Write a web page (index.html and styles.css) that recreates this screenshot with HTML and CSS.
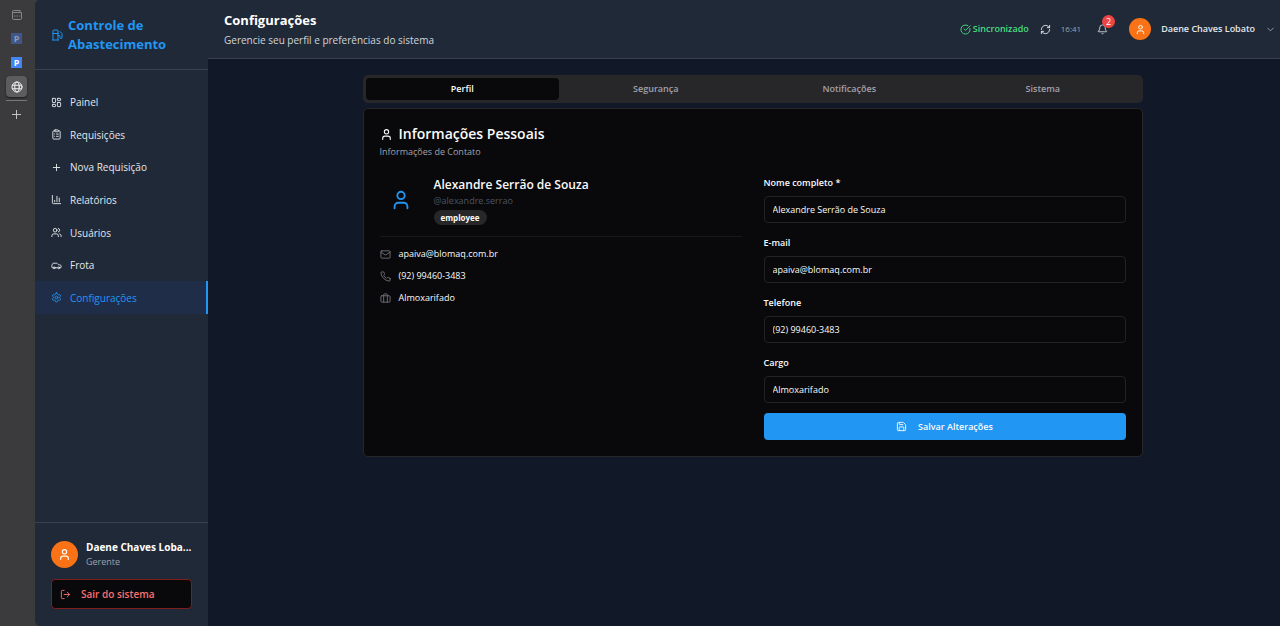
FILE: index.html
```html
<!DOCTYPE html>
<html lang="pt-BR">
<head>
<meta charset="utf-8">
<meta name="viewport" content="width=device-width, initial-scale=1">
<title>Controle de Abastecimento</title>
<link rel="stylesheet" href="styles.css">
</head>
<body>
<svg class="sprite" aria-hidden="true">
  <symbol id="user" viewBox="0 0 24 24"><path d="M19 21v-2a4 4 0 0 0-4-4H9a4 4 0 0 0-4 4v2"/><circle cx="12" cy="7" r="4"/></symbol>
</svg>
<div class="shell">
  <nav class="rail" aria-label="Abas">
    <button class="rail-btn dim" aria-label="Ações de abas"><svg class="icon s12" viewBox="0 0 24 24"><path d="M3 5a2 2 0 0 1 2-2h13v4h3v12a2 2 0 0 1-2 2H5a2 2 0 0 1-2-2zM3 7h15M7 14h1M12 14h1M17 14h.01"/></svg></button>
    <button class="rail-btn"><span class="tile faded">P</span></button>
    <button class="rail-btn"><span class="tile">P</span></button>
    <button class="rail-btn current" aria-label="Controle de Abastecimento"><svg class="icon s12" viewBox="0 0 24 24"><circle cx="12" cy="12" r="10"/><ellipse cx="12" cy="12" rx="4.500" ry="10"/><path d="M3 8.500h18M3 15.500h18"/></svg></button>
    <button class="rail-btn add" aria-label="Nova aba"><svg class="icon s11" viewBox="0 0 24 24"><path d="M3 12h18M12 3v18"/></svg></button>
  </nav>

  <aside class="sidebar">
    <div class="brand">
      <svg class="icon s12" viewBox="0 0 24 24"><path d="M3 22h12M4 9h10M14 22V4a2 2 0 0 0-2-2H6a2 2 0 0 0-2 2v18M14 13h2a2 2 0 0 1 2 2v2a2 2 0 0 0 4 0V9.830a2 2 0 0 0-.590-1.420L18 5"/></svg>
      <span>Controle de Abastecimento</span>
    </div>
    <ul class="menu">
      <li><a href="#painel"><svg class="icon s11" viewBox="0 0 24 24"><rect x="3" y="3" width="7" height="9" rx="1"/><rect x="14" y="3" width="7" height="5" rx="1"/><rect x="14" y="12" width="7" height="9" rx="1"/><rect x="3" y="16" width="7" height="5" rx="1"/></svg>Painel</a></li>
      <li><a href="#requisicoes"><svg class="icon s11" viewBox="0 0 24 24"><rect x="8" y="2" width="8" height="4" rx="1"/><path d="M16 4h2a2 2 0 0 1 2 2v14a2 2 0 0 1-2 2H6a2 2 0 0 1-2-2V6a2 2 0 0 1 2-2h2M12 11h4M12 16h4M8 11h.01M8 16h.01"/></svg>Requisições</a></li>
      <li><a href="#nova"><svg class="icon s11" viewBox="0 0 24 24"><path d="M5 12h14M12 5v14"/></svg>Nova Requisição</a></li>
      <li><a href="#relatorios"><svg class="icon s11" viewBox="0 0 24 24"><path d="M3 3v16a2 2 0 0 0 2 2h16M18 17V9M13 17V5M8 17v-3"/></svg>Relatórios</a></li>
      <li><a href="#usuarios"><svg class="icon s11" viewBox="0 0 24 24"><path d="M16 21v-2a4 4 0 0 0-4-4H6a4 4 0 0 0-4 4v2M22 21v-2a4 4 0 0 0-3-3.870M16 3.130a4 4 0 0 1 0 7.750"/><circle cx="9" cy="7" r="4"/></svg>Usuários</a></li>
      <li><a href="#frota"><svg class="icon s11" viewBox="0 0 24 24"><path d="M19 17h2c.6 0 1-.4 1-1v-3c0-.9-.7-1.700-1.500-1.900C18.700 10.600 16 10 16 10s-1.300-1.400-2.200-2.300c-.5-.4-1.100-.7-1.800-.7H5c-.6 0-1.100.4-1.400.9l-1.400 2.900A3.700 3.700 0 0 0 2 12v4c0 .6.4 1 1 1h2M9 17h6"/><circle cx="7" cy="17" r="2"/><circle cx="17" cy="17" r="2"/></svg>Frota</a></li>
      <li><a href="#configuracoes" class="active" aria-current="page"><svg class="icon s11" viewBox="0 0 24 24"><path d="M12.220 2h-.44a2 2 0 0 0-2 2v.18a2 2 0 0 1-1 1.730l-.43.25a2 2 0 0 1-2 0l-.15-.08a2 2 0 0 0-2.730.73l-.22.38a2 2 0 0 0 .73 2.730l.15.1a2 2 0 0 1 1 1.720v.51a2 2 0 0 1-1 1.740l-.15.09a2 2 0 0 0-.73 2.730l.22.38a2 2 0 0 0 2.730.73l.15-.08a2 2 0 0 1 2 0l.43.25a2 2 0 0 1 1 1.730V20a2 2 0 0 0 2 2h.44a2 2 0 0 0 2-2v-.18a2 2 0 0 1 1-1.730l.43-.25a2 2 0 0 1 2 0l.15.08a2 2 0 0 0 2.730-.73l.22-.39a2 2 0 0 0-.73-2.730l-.15-.08a2 2 0 0 1-1-1.740v-.5a2 2 0 0 1 1-1.740l.15-.09a2 2 0 0 0 .73-2.730l-.22-.38a2 2 0 0 0-2.730-.73l-.15.08a2 2 0 0 1-2 0l-.43-.25a2 2 0 0 1-1-1.730V4a2 2 0 0 0-2-2z"/><circle cx="12" cy="12" r="3"/></svg>Configurações</a></li>
    </ul>
    <div class="account">
      <div class="account-row">
        <span class="avatar large"><svg class="icon s13"><use href="#user"/></svg></span>
        <div class="account-text">
          <div class="account-name" title="Daene Chaves Lobato">Daene Chaves Loba...</div>
          <div class="account-role">Gerente</div>
        </div>
      </div>
      <button class="logout"><svg class="icon s11" viewBox="0 0 24 24"><path d="M9 21H5a2 2 0 0 1-2-2V5a2 2 0 0 1 2-2h4M16 17l5-5-5-5M21 12H9"/></svg>Sair do sistema</button>
    </div>
  </aside>

  <div class="page">
    <header class="topbar">
      <div class="heading">
        <h1>Configurações</h1>
        <p>Gerencie seu perfil e preferências do sistema</p>
      </div>
      <div class="tools">
        <span class="sync"><svg class="icon s11" viewBox="0 0 24 24"><path d="M21.800 10A10 10 0 1 1 17 3.335M9 11l3 3L22 4"/></svg>Sincronizado</span>
        <button class="tool refresh" aria-label="Atualizar"><svg class="icon s11" viewBox="0 0 24 24"><path d="M3 12a9 9 0 0 1 9-9 9.750 9.750 0 0 1 6.740 2.740L21 8M21 3v5h-5M21 12a9 9 0 0 1-9 9 9.750 9.750 0 0 1-6.740-2.740L3 16M8 16H3v5"/></svg></button>
        <time class="clock">16:41</time>
        <button class="tool bell" aria-label="Notificações"><svg class="icon s11" viewBox="0 0 24 24"><path d="M10.268 21a2 2 0 0 0 3.464 0M3.262 15.326A1 1 0 0 0 4 17h16a1 1 0 0 0 .740-1.673C19.410 13.956 18 12.499 18 8A6 6 0 0 0 6 8c0 4.499-1.411 5.956-2.738 7.326"/></svg><span class="count">2</span></button>
        <button class="tool profile"><span class="avatar"><svg class="icon s11"><use href="#user"/></svg></span><span>Daene Chaves Lobato</span><svg class="icon s11 chevron" viewBox="0 0 24 24"><path d="m6 9 6 6 6-6"/></svg></button>
      </div>
    </header>

    <main class="content">
      <div class="tabs" role="tablist">
        <button role="tab" class="tab selected" aria-selected="true">Perfil</button>
        <button role="tab" class="tab">Segurança</button>
        <button role="tab" class="tab">Notificações</button>
        <button role="tab" class="tab">Sistema</button>
      </div>
      <section class="card">
        <h2><svg class="icon s13"><use href="#user"/></svg>Informações Pessoais</h2>
        <p class="subtitle">Informações de Contato</p>
        <div class="columns">
          <div>
            <div class="person">
              <span class="portrait"><svg class="icon s22"><use href="#user"/></svg></span>
              <div>
                <h3>Alexandre Serrão de Souza</h3>
                <div class="handle">@alexandre.serrao</div>
                <span class="badge">employee</span>
              </div>
            </div>
            <ul class="contacts">
              <li><svg class="icon s11" viewBox="0 0 24 24"><rect x="2" y="4" width="20" height="16" rx="2"/><path d="m22 7-8.970 5.700a1.940 1.940 0 0 1-2.060 0L2 7"/></svg>apaiva@blomaq.com.br</li>
              <li><svg class="icon s11" viewBox="0 0 24 24"><path d="M22 16.920v3a2 2 0 0 1-2.180 2 19.790 19.790 0 0 1-8.630-3.070 19.500 19.500 0 0 1-6-6 19.790 19.790 0 0 1-3.070-8.670A2 2 0 0 1 4.110 2h3a2 2 0 0 1 2 1.720 12.840 12.840 0 0 0 .7 2.810 2 2 0 0 1-.45 2.110L8.090 9.910a16 16 0 0 0 6 6l1.270-1.270a2 2 0 0 1 2.110-.45 12.840 12.840 0 0 0 2.810.7A2 2 0 0 1 22 16.920z"/></svg>(92) 99460-3483</li>
              <li><svg class="icon s11" viewBox="0 0 24 24"><rect x="2" y="6" width="20" height="14" rx="2"/><path d="M16 20V4a2 2 0 0 0-2-2h-4a2 2 0 0 0-2 2v16"/></svg>Almoxarifado</li>
            </ul>
          </div>
          <form class="form">
            <div class="field"><label for="nome">Nome completo *</label><input id="nome" type="text" value="Alexandre Serrão de Souza"></div>
            <div class="field"><label for="email">E-mail</label><input id="email" type="email" value="apaiva@blomaq.com.br"></div>
            <div class="field"><label for="telefone">Telefone</label><input id="telefone" type="tel" value="(92) 99460-3483"></div>
            <div class="field"><label for="cargo">Cargo</label><input id="cargo" type="text" value="Almoxarifado"></div>
            <button type="button" class="save"><svg class="icon s11" viewBox="0 0 24 24"><path d="M15.200 3a2 2 0 0 1 1.400.6l3.800 3.800a2 2 0 0 1 .6 1.400V19a2 2 0 0 1-2 2H5a2 2 0 0 1-2-2V5a2 2 0 0 1 2-2zM17 21v-7a1 1 0 0 0-1-1H8a1 1 0 0 0-1 1v7M7 3v4a1 1 0 0 0 1 1h7"/></svg>Salvar Alterações</button>
          </form>
        </div>
      </section>
    </main>
  </div>
</div>
</body>
</html>
```

FILE: styles.css
```css
* { box-sizing: border-box; }
body, h1, h2, h3, p, ul { margin: 0; padding: 0; }
ul { list-style: none; }
body {
  background: #3b3b3d;
  color: #fafafa;
  font-family: "Open Sans", "Noto Sans", sans-serif;
  font-size: 9px;
  line-height: 12px;
}
button, input { font: inherit; color: inherit; }
button { border: 0; padding: 0; background: none; cursor: pointer; }
a { color: inherit; text-decoration: none; }

.sprite { position: absolute; width: 0; height: 0; }
.icon { flex: none; display: block; fill: none; stroke: currentColor; stroke-width: 2; stroke-linecap: round; stroke-linejoin: round; }
.s11 { width: 11px; height: 11px; }
.s12 { width: 12px; height: 12px; }
.s13 { width: 13px; height: 13px; }
.s22 { width: 22px; height: 22px; }

.shell { display: flex; min-height: 100vh; }

/* Vertical browser tabs */
.rail { flex: none; width: 35px; padding: 4px 6px; display: flex; flex-direction: column; gap: 3px; color: #d0d0d0; }
.rail-btn { width: 21px; height: 21px; display: grid; place-items: center; border-radius: 4px; }
.rail-btn.dim { color: #88888a; }
.rail-btn.current { background: #5c5c5f; color: #f2f2f2; box-shadow: 0 1px 2px #1c1c1e; }
.rail-btn.add { height: 28px; border-top: 1px solid #77777a; border-radius: 0; }
.tile { width: 11px; height: 11px; background: #4285f4; color: #fff; font-weight: 700; line-height: 11px; text-align: center; }
.tile.faded { background: #3f5689; color: #8f9bb8; }

/* Sidebar */
.sidebar { flex: none; width: 173px; display: flex; flex-direction: column; background: #1f2937; border-radius: 5px 0 0 5px; }
.brand { display: flex; align-items: center; gap: 5px; padding: 16px 16px 15px; border-bottom: 1px solid #374151; color: #2196f3; font-size: 13px; font-weight: 700; line-height: 19px; }
.menu { flex: none; display: grid; grid-auto-rows: 1fr; height: 228px; margin-top: 16px; color: #e5e7eb; font-size: 10px; }
.menu a { display: flex; align-items: center; gap: 8px; height: 100%; padding-left: 16px; border-right: 2px solid transparent; }
.menu .active { background: #1f2d49; border-color: #2196f3; color: #2196f3; }
.account { margin-top: auto; padding: 17px 16px; border-top: 1px solid #374151; }
.account-row { display: flex; align-items: center; gap: 8px; }
.account-text { min-width: 0; }
.account-name { white-space: nowrap; color: #fff; font-size: 10px; font-weight: 700; line-height: 15px; }
.account-role { color: #9ca3af; line-height: 13px; }
.avatar { flex: none; display: grid; place-items: center; width: 22px; height: 22px; border-radius: 50%; background: #f97316; color: #fff; }
.avatar.large { width: 27px; height: 27px; }
.logout { display: flex; align-items: center; gap: 10px; width: 100%; height: 30px; margin-top: 11px; padding-left: 8px; border: 1px solid #7f1d1d; border-radius: 4px; background: #09090b; color: #f87171; font-size: 10px; font-weight: 600; }

/* Top bar */
.page { flex: 1; min-width: 0; background: #111827; }
.topbar { display: flex; align-items: center; justify-content: space-between; padding: 10px 4px 8px 16px; border-bottom: 1px solid #374151; background: #1f2937; }
.heading h1 { font-size: 13px; font-weight: 700; line-height: 20px; color: #fff; }
.heading p { font-size: 10px; line-height: 20px; color: #d1d5db; }
.tools { display: flex; align-items: center; padding-bottom: 2px; }
.sync { display: flex; align-items: center; gap: 2px; color: #4ade80; font-weight: 600; }
.tool { display: flex; align-items: center; color: #e5e7eb; }
.refresh { margin-left: 11px; }
.clock { margin-left: 10px; color: #9ca3af; font-size: 8px; }
.bell { position: relative; margin-left: 16px; color: #d1d5db; }
.count { position: absolute; left: 5px; top: -9px; width: 13px; height: 13px; border-radius: 50%; background: #ef4444; color: #fff; line-height: 13px; }
.profile { margin-left: 21px; gap: 10px; font-weight: 600; }
.chevron { color: #9ca3af; }

/* Settings */
.content { max-width: 797px; margin: 0 auto; padding: 16px 0 16px 17px; }
.tabs { display: grid; grid-template-columns: repeat(4, 1fr); padding: 3px; border-radius: 5px; background: #27272a; color: #a1a1aa; font-weight: 600; }
.tab { height: 22px; border-radius: 4px; font-weight: 600; }
.tab.selected { background: #09090b; color: #fafafa; }
.card { margin-top: 5px; padding: 16px; border: 1px solid #27272a; border-radius: 5px; background: #09090b; }
.card h2 { display: flex; align-items: center; gap: 6px; font-size: 14px; font-weight: 600; line-height: 18px; }
.subtitle { margin-top: 3px; color: #a1a1aa; }
.columns { display: grid; grid-template-columns: 1fr 1fr; gap: 22px; margin-top: 19px; }
.person { display: flex; align-items: flex-start; gap: 11px; padding-bottom: 11px; border-bottom: 1px solid #18181b; }
.portrait { display: grid; place-items: center; width: 43px; height: 45px; color: #2196f3; }
.person h3 { font-size: 12px; font-weight: 600; line-height: 16px; }
.handle { color: #4b5563; line-height: 16px; }
.badge { display: block; width: max-content; margin-top: 1px; padding: 0 7px; border-radius: 8px; background: #27272a; font-size: 8px; font-weight: 700; line-height: 15px; }
.contacts { display: grid; gap: 10px; margin-top: 11px; }
.contacts li { display: flex; align-items: center; gap: 8px; }
.contacts .icon { color: #71717a; }
.form { display: grid; }
.field { display: grid; gap: 7px; margin-bottom: 14px; }
.field label { font-weight: 600; }
.field input { width: 100%; height: 27px; padding: 0 8px; border: 1px solid #222225; border-radius: 4px; background: #09090b; }
.field:nth-last-child(2) { margin-bottom: 10px; }
.save { display: flex; align-items: center; justify-content: center; gap: 11px; height: 27px; border-radius: 4px; background: #2196f3; font-weight: 600; }
```
